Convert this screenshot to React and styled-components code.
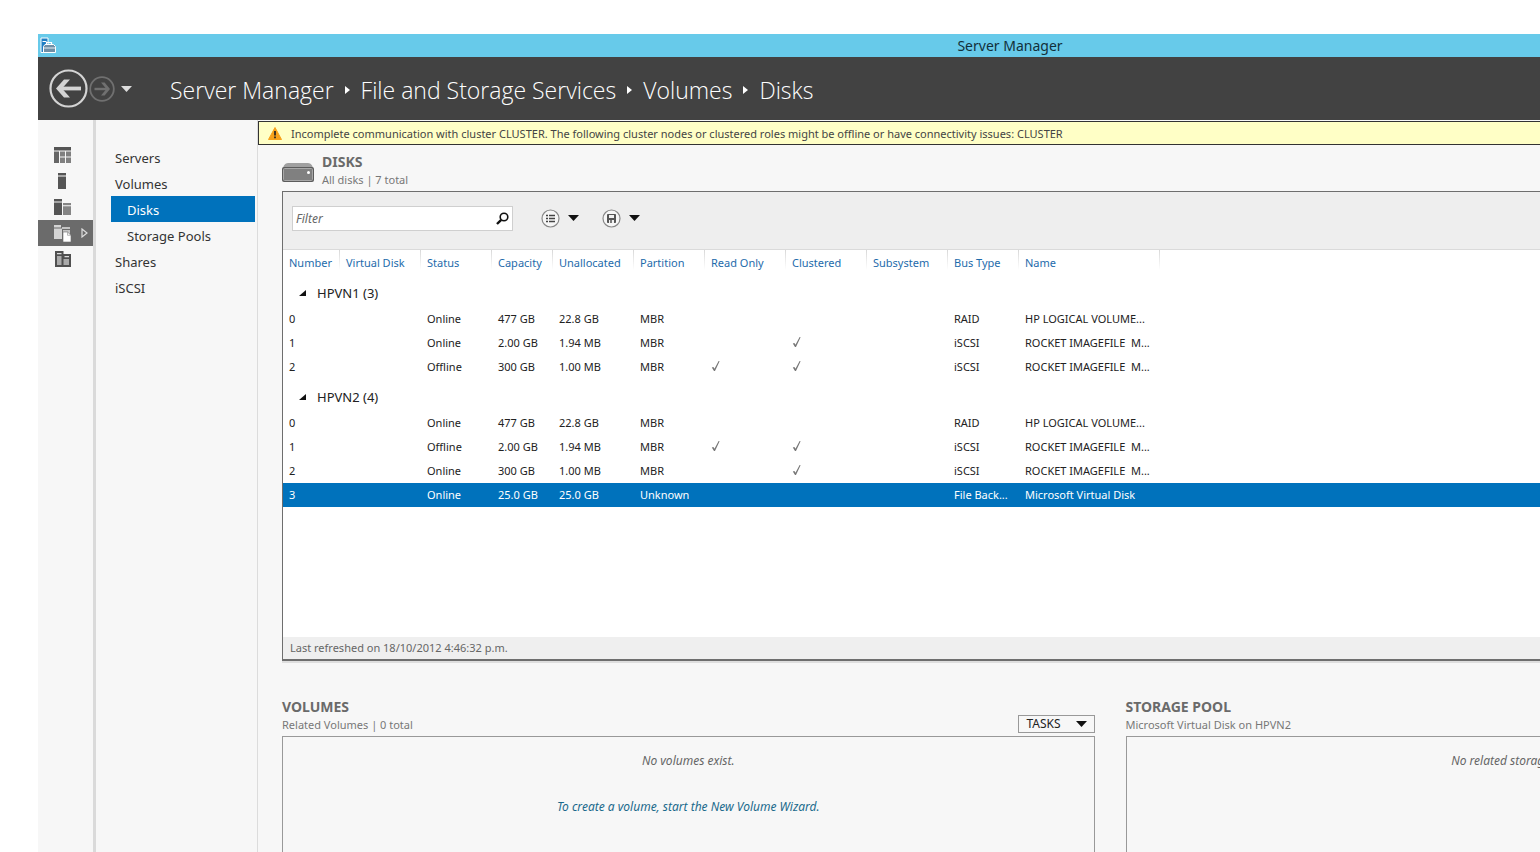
import React from "react";
import styled, { createGlobalStyle } from "styled-components";

const GlobalStyle = createGlobalStyle`
    * {
        box-sizing: border-box;
    }

    body {
        margin: 0;
        background: #fff;
        font-family: "Segoe UI", "Noto Sans", "Open Sans", sans-serif;
        font-size: 11px;
        color: #222;
    }

    button, input {
        font: inherit;
        color: inherit;
    }

    button {
        padding: 0;
        border: 0;
        background: none;
        cursor: pointer;
    }
`

const Page = styled.div`
    height: 100vh;
    padding: 34px 0 0 38px;
    overflow: hidden;
`

// the window is wider than the screen and runs off its right edge
const Window = styled.div`
    display: flex;
    flex-direction: column;
    height: 100%;
    margin-right: -442px;
`

const TitleBar = styled.div`
    display: flex;
    flex: none;
    align-items: center;
    height: 23px;
    padding: 0 2px;
    background: #67caea;
`

const WindowTitle = styled.div`
    flex: 1;
    padding-right: 16px;
    text-align: center;
    font-size: 14px;
    line-height: 22px;
    color: #12303a;
`

const Header = styled.header`
    display: flex;
    flex: none;
    align-items: center;
    height: 63px;
    padding-left: 11px;
    background: #424242;
    color: #fff;
`

const NavButton = styled.button`
    display: flex;
    margin-right: ${({ $gap }) => $gap || 0}px;
`

const Breadcrumbs = styled.nav`
    display: flex;
    align-items: center;
    gap: 11px;
    margin-left: 38px;
    padding-top: 2px;
    font-family: "Segoe UI", "Open Sans", sans-serif;
    font-size: 23px;
    font-weight: 300;
    line-height: 32px;

    a {
        color: #fff;
        text-decoration: none;
        white-space: nowrap;
    }
`

const Body = styled.div`
    display: flex;
    flex: 1;
    min-height: 0;
    background: #f7f7f7;
`

const Rail = styled.nav`
    display: flex;
    flex: none;
    flex-direction: column;
    width: 58px;
    padding-top: 22px;
    border-right: 3px solid #dadada;
`

const RailButton = styled.button`
    display: flex;
    align-items: center;
    gap: 9px;
    height: 26px;
    padding-left: 16px;
    background: ${({ $active }) => ($active ? "#6b6b6b" : "transparent")};
`

const Menu = styled.nav`
    display: flex;
    flex: none;
    flex-direction: column;
    width: 162px;
    padding: 24px 2px 0 15px;
    border-right: 1px solid #dcdcdc;
`

const MenuItem = styled.a`
    height: 26px;
    padding-top: 2px;
    padding-left: ${({ $sub }) => ($sub ? 16 : 4)}px;
    font-size: 13px;
    line-height: 24px;
    text-decoration: none;
    color: ${({ $active }) => ($active ? "#fff" : "#333")};
    background: ${({ $active }) => ($active ? "#0072bc" : "transparent")};
`

const Main = styled.main`
    display: flex;
    flex: 1;
    flex-direction: column;
    min-width: 0;
    padding-top: 1px;
`

const Banner = styled.div`
    display: flex;
    flex: none;
    align-items: center;
    gap: 9px;
    height: 24px;
    padding-left: 9px;
    border: 1px solid #333;
    background: #ffffc6;
    color: #444;
    white-space: nowrap;
`

const Content = styled.div`
    padding: 8px 44px 0 24px;
`

const TileHead = styled.div`
    display: flex;
    align-items: flex-end;
    gap: 8px;
    height: 38px;
    padding-bottom: 2px;
`

const TileTitle = styled.h2`
    margin: 0;
    font-size: 14px;
    font-weight: 700;
    line-height: 18px;
    color: #6a6a6a;
`

const TileSubtitle = styled.div`
    line-height: 18px;
    color: #777;
`

const DiskPanel = styled.section`
    border: 1px solid #6e6e6e;
    border-bottom-width: 2px;
    background: #fff;
    box-shadow: 0 2px 0 #dedede;
`

const Toolbar = styled.div`
    display: flex;
    align-items: center;
    height: 58px;
    padding: 0 9px 5px;
    border-bottom: 1px solid #dadada;
    background: #eee;
`

const FilterBox = styled.label`
    display: flex;
    align-items: center;
    width: 221px;
    height: 25px;
    margin-right: 28px;
    padding: 0 3px;
    border: 1px solid #cfcfcf;
    background: #fff;
`

const FilterInput = styled.input`
    flex: 1;
    min-width: 0;
    padding: 0;
    border: 0;
    outline: 0;
    background: none;
    font-size: 12px;

    &::placeholder {
        font-style: italic;
        color: #666;
        opacity: 1;
    }
`

const ToolButton = styled.button`
    display: flex;
    align-items: center;
    gap: 8px;
    margin-right: 23px;
`

const TableArea = styled.div`
    min-height: 387px;
`

const Table = styled.table`
    width: 100%;
    table-layout: fixed;
    border-collapse: collapse;
`

const HeadCell = styled.th`
    width: ${({ $width }) => ($width ? `${$width}px` : "auto")};
    height: 25px;
    padding: 0 0 0 6px;
    background: ${({ $width }) =>
        $width ? "linear-gradient(#d8d8d8, #fff) right top / 1px 20px no-repeat" : "none"};
    font-weight: 400;
    text-align: left;
    white-space: nowrap;
    color: #1e6bab;
`

const GroupCell = styled.td`
    height: 32px;
    padding: 4px 0 0 16px;
`

const GroupButton = styled.button`
    display: flex;
    align-items: center;
    gap: 11px;
    font-size: 13px;
    line-height: 24px;
`

const Row = styled.tr`
    background: ${({ $selected }) => ($selected ? "#0072bc" : "transparent")};
    color: ${({ $selected }) => ($selected ? "#fff" : "#222")};
`

const Cell = styled.td`
    height: 24px;
    padding: 0 0 2px 6px;
    overflow: hidden;
    white-space: pre;

    svg {
        display: block;
    }
`

const PanelFooter = styled.div`
    height: 22px;
    padding-left: 7px;
    background: #efefef;
    line-height: 22px;
    color: #666;
`

const Tiles = styled.div`
    display: grid;
    grid-template-columns: 1fr 1fr;
    gap: 31px;
    padding-top: 37px;
`

const TileText = styled.div`
    flex: 1;
`

const TasksButton = styled.button`
    display: flex;
    align-items: center;
    justify-content: space-between;
    width: 77px;
    height: 18px;
    margin-bottom: 1px;
    padding: 0 7px 0 8px;
    border: 1px solid #999;
    font-size: 12px;
    line-height: 16px;
`

const TilePanel = styled.div`
    display: flex;
    flex-direction: column;
    align-items: center;
    gap: 28px;
    min-height: 240px;
    padding-top: 15px;
    border: 1px solid #999;
    font-size: 12px;
    font-style: italic;
    line-height: 18px;
    color: #666;
`

const WizardLink = styled.a`
    text-decoration: none;
    color: #1b6a8c;
`

const Caret = ({ color = "#111", width = 11, height = 6 }) => (
    <svg width={width} height={height} viewBox="0 0 11 6">
        <path d="M0 0h11L5.5 6z" fill={color} />
    </svg>
)

const Check = () => (
    <svg width="10" height="12" viewBox="0 0 10 12">
        <path d="M.8 7.500l1.600-.6 1.100 1.900L7.600 1l1 .2L4 11H3z" fill="#777" />
    </svg>
)

const railIcons = [
    {
        label: "Dashboard",
        drawing: (
            <>
                <path d="M0 0h17v3.500H0z" fill="#555" />
                <path d="M0 4.500h5V16H0z" fill="#666" />
                <path d="M6 4.500h5v5H6zM12 4.500h5v5h-5zM6 10.500h5V16H6zM12 10.500h5V16h-5z" fill="#808080" />
            </>
        ),
    },
    {
        label: "Local Server",
        drawing: (
            <>
                <path d="M4 0h8v2.500H4z" fill="#555" />
                <path d="M4 3.500h8V16H4z" fill="#555" />
            </>
        ),
    },
    {
        label: "All Servers",
        drawing: (
            <>
                <path d="M0 0h8v2.500H0zM0 3.500h8V16H0z" fill="#555" />
                <path d="M9 4h8v2.200H9zM9 7.200h8V16H9z" fill="#858585" />
            </>
        ),
    },
    {
        label: "File and Storage Services",
        active: true,
        drawing: (
            <>
                <path d="M0 0h7v2.500H0zM0 3.500h8V14H0z" fill="#d4d4d4" />
                <path d="M8 2h8v2H8zM9 5h7v5H9z" fill="#c4c4c4" />
                <path d="M9 7h4.500L17 10.300V17H9z" fill="#fff" stroke="#6b6b6b" strokeWidth=".6" />
                <path d="M13.500 7v3.300H17" fill="none" stroke="#999" strokeWidth=".7" />
            </>
        ),
    },
    {
        label: "Hyper-V",
        drawing: (
            <>
                <path d="M1 0h8.500v3H17v13H1z" fill="#505050" />
                <path d="M3 2h4.500v1.300H3zM10.500 5h4.500v1.300h-4.500z" fill="#ddd" />
                <path d="M3 5h4.500v9H3zM9.500 8h5.500v6H9.500z" fill="#aaa" />
            </>
        ),
    },
]

const menuItems = [
    { label: "Servers" },
    { label: "Volumes" },
    { label: "Disks", sub: true, active: true },
    { label: "Storage Pools", sub: true },
    { label: "Shares" },
    { label: "iSCSI" },
]

const crumbs = ["Server Manager", "File and Storage Services", "Volumes", "Disks"]

const columns = [
    { key: "number", label: "Number", width: 57 },
    { key: "virtualDisk", label: "Virtual Disk", width: 81 },
    { key: "status", label: "Status", width: 71 },
    { key: "capacity", label: "Capacity", width: 61 },
    { key: "unallocated", label: "Unallocated", width: 81 },
    { key: "partition", label: "Partition", width: 71 },
    { key: "readOnly", label: "Read Only", width: 81 },
    { key: "clustered", label: "Clustered", width: 81 },
    { key: "subsystem", label: "Subsystem", width: 81 },
    { key: "busType", label: "Bus Type", width: 71 },
    { key: "name", label: "Name", width: 141 },
]

const groups = [
    {
        name: "HPVN1",
        disks: [
            { number: "0", status: "Online", capacity: "477 GB", unallocated: "22.8 GB", partition: "MBR", busType: "RAID", name: "HP LOGICAL VOLUME..." },
            { number: "1", status: "Online", capacity: "2.00 GB", unallocated: "1.94 MB", partition: "MBR", clustered: true, busType: "iSCSI", name: "ROCKET IMAGEFILE  M..." },
            { number: "2", status: "Offline", capacity: "300 GB", unallocated: "1.00 MB", partition: "MBR", readOnly: true, clustered: true, busType: "iSCSI", name: "ROCKET IMAGEFILE  M..." },
        ],
    },
    {
        name: "HPVN2",
        disks: [
            { number: "0", status: "Online", capacity: "477 GB", unallocated: "22.8 GB", partition: "MBR", busType: "RAID", name: "HP LOGICAL VOLUME..." },
            { number: "1", status: "Offline", capacity: "2.00 GB", unallocated: "1.94 MB", partition: "MBR", readOnly: true, clustered: true, busType: "iSCSI", name: "ROCKET IMAGEFILE  M..." },
            { number: "2", status: "Online", capacity: "300 GB", unallocated: "1.00 MB", partition: "MBR", clustered: true, busType: "iSCSI", name: "ROCKET IMAGEFILE  M..." },
            { number: "3", status: "Online", capacity: "25.0 GB", unallocated: "25.0 GB", partition: "Unknown", busType: "File Back...", name: "Microsoft Virtual Disk", selected: true },
        ],
    },
]

const DiskTable = () => {
    return (
        <Table>
            <thead>
                <tr>
                    {columns.map((column) => (
                        <HeadCell key={column.key} $width={column.width} scope="col">{column.label}</HeadCell>
                    ))}
                    <HeadCell as="td" />
                </tr>
            </thead>
            {groups.map((group) => (
                <tbody key={group.name}>
                    <tr>
                        <GroupCell colSpan={columns.length + 1}>
                            <GroupButton type="button" aria-expanded="true">
                                <svg width="7" height="6" viewBox="0 0 7 6"><path d="M7 0v6H0z" fill="#111" /></svg>
                                {`${group.name} (${group.disks.length})`}
                            </GroupButton>
                        </GroupCell>
                    </tr>
                    {group.disks.map((disk) => (
                        <Row key={disk.number} $selected={disk.selected}>
                            {columns.map(({ key }) => (
                                <Cell key={key}>{disk[key] === true ? <Check /> : disk[key]}</Cell>
                            ))}
                            <Cell />
                        </Row>
                    ))}
                </tbody>
            ))}
        </Table>
    )
}

const App = () => {
    return (
        <>
        <GlobalStyle />
        <Page>
            <Window>
                <TitleBar>
                    <svg width="16" height="17" viewBox="0 0 16 17">
                        <path d="M1 1h7v14.500H1z" fill="#1f7fc4" stroke="#fff" />
                        <path d="M2.500 4.500h4" stroke="#fff" />
                        <path d="M3.500 9.500l1.500-2h8.500l2 2v6h-12z" fill="#6f8fa6" stroke="#fff" />
                        <path d="M6.500 7V5.500h5V7" fill="none" stroke="#fff" strokeWidth="1.200" />
                        <path d="M3.500 11h12" stroke="#e8f0f4" />
                    </svg>
                    <WindowTitle>Server Manager</WindowTitle>
                </TitleBar>
                <Header>
                    <NavButton type="button" aria-label="Back" $gap={1}>
                        <svg width="39" height="39" viewBox="0 0 39 39" fill="none" stroke="#d4d4d4">
                            <circle cx="19.5" cy="19.5" r="18" strokeWidth="2.200" />
                            <path d="M32 19.500H10" strokeWidth="3.800" />
                            <path d="M15 10.500h6l-8 9 8 9h-6l-8-9z" fill="#d4d4d4" stroke="none" />
                        </svg>
                    </NavButton>
                    <NavButton type="button" aria-label="Forward" $gap={6}>
                        <svg width="26" height="26" viewBox="0 0 26 26" fill="none" stroke="#707070">
                            <circle cx="13" cy="13" r="11.8" strokeWidth="1.800" />
                            <path d="M5.500 13h13" strokeWidth="2.400" />
                            <path d="M12 6.500h3.600l5.400 6.500-5.400 6.500H12l5.400-6.500z" fill="#707070" stroke="none" />
                        </svg>
                    </NavButton>
                    <NavButton type="button" aria-label="Recent locations">
                        <Caret color="#dcdcdc" />
                    </NavButton>
                    <Breadcrumbs>
                        {crumbs.map((crumb, index) => (
                            <React.Fragment key={crumb}>
                                {index > 0 && (
                                    <svg width="5" height="8" viewBox="0 0 5 8"><path d="M0 0l5 4-5 4z" fill="#fff" /></svg>
                                )}
                                <a href="#">{crumb}</a>
                            </React.Fragment>
                        ))}
                    </Breadcrumbs>
                </Header>
                <Body>
                    <Rail>
                        {railIcons.map((icon) => (
                            <RailButton key={icon.label} type="button" aria-label={icon.label} $active={icon.active}>
                                <svg width="18" height="17" viewBox="0 0 18 17">{icon.drawing}</svg>
                                {icon.active && (
                                    <svg width="7" height="10" viewBox="0 0 7 10"><path d="M1 1l5 4-5 4z" fill="none" stroke="#ddd" strokeWidth="1.200" /></svg>
                                )}
                            </RailButton>
                        ))}
                    </Rail>
                    <Menu>
                        {menuItems.map((item) => (
                            <MenuItem key={item.label} href="#" $sub={item.sub} $active={item.active}>{item.label}</MenuItem>
                        ))}
                    </Menu>
                    <Main>
                        <Banner role="alert">
                            <svg width="14" height="13" viewBox="0 0 14 13">
                                <path d="M7 .5L13.500 12.500H.5z" fill="#f7a11a" stroke="#f7a11a" strokeLinejoin="round" />
                                <path d="M7 4v4.500M7 9.500v1.700" stroke="#222" strokeWidth="1.700" />
                            </svg>
                            Incomplete communication with cluster CLUSTER. The following cluster nodes or clustered roles might be offline or have connectivity issues: CLUSTER
                        </Banner>
                        <Content>
                            <TileHead>
                                <svg width="32" height="28" viewBox="0 0 32 28">
                                    <path d="M1 7c1-4 3-5 6-5h18c3 0 5 1 6 5z" fill="#a0a0a0" />
                                    <rect x="0" y="6" width="32" height="15" rx="2" fill="#5c5c5c" />
                                    <rect x="1.500" y="7.500" width="29" height="12" rx="1" fill="#808080" stroke="#a8a8a8" />
                                    <circle cx="26.500" cy="11.500" r="1.500" fill="#fff" />
                                </svg>
                                <TileText>
                                    <TileTitle>DISKS</TileTitle>
                                    <TileSubtitle>All disks | 7 total</TileSubtitle>
                                </TileText>
                            </TileHead>
                            <DiskPanel>
                                <Toolbar>
                                    <FilterBox>
                                        <FilterInput type="text" placeholder="Filter" aria-label="Filter" />
                                        <svg width="13" height="13" viewBox="0 0 13 13" fill="none" stroke="#111">
                                            <circle cx="8" cy="5" r="3.800" strokeWidth="1.600" />
                                            <path d="M5.200 7.800L1 12" strokeWidth="2.400" />
                                        </svg>
                                    </FilterBox>
                                    <ToolButton type="button" aria-label="View">
                                        <svg width="19" height="19" viewBox="0 0 19 19" fill="none">
                                            <circle cx="9.500" cy="9.500" r="8.500" fill="#f6f6f6" stroke="#888" strokeWidth="1.200" />
                                            <path d="M5 6.500h2M8 6.500h6M5 9.500h2M8 9.500h6M5 12.500h2M8 12.500h6" stroke="#444" strokeWidth="1.500" />
                                        </svg>
                                        <Caret />
                                    </ToolButton>
                                    <ToolButton type="button" aria-label="Saved queries">
                                        <svg width="19" height="19" viewBox="0 0 19 19" fill="none">
                                            <circle cx="9.500" cy="9.500" r="8.500" fill="#f6f6f6" stroke="#888" strokeWidth="1.200" />
                                            <path d="M5.500 5.500h8v8h-8z" fill="#555" stroke="#555" />
                                            <path d="M7 6h5v3H7zM7 11h5v3H7z" fill="#f0f0f0" />
                                            <path d="M9 11v3" stroke="#555" strokeWidth="1.500" />
                                        </svg>
                                        <Caret />
                                    </ToolButton>
                                </Toolbar>
                                <TableArea>
                                    <DiskTable />
                                </TableArea>
                                <PanelFooter>Last refreshed on 18/10/2012 4:46:32 p.m.</PanelFooter>
                            </DiskPanel>
                            <Tiles>
                                <section>
                                    <TileHead>
                                        <TileText>
                                            <TileTitle>VOLUMES</TileTitle>
                                            <TileSubtitle>Related Volumes | 0 total</TileSubtitle>
                                        </TileText>
                                        <TasksButton type="button">
                                            TASKS
                                            <Caret />
                                        </TasksButton>
                                    </TileHead>
                                    <TilePanel>
                                        <span>No volumes exist.</span>
                                        <WizardLink href="#">To create a volume, start the New Volume Wizard.</WizardLink>
                                    </TilePanel>
                                </section>
                                <section>
                                    <TileHead>
                                        <TileText>
                                            <TileTitle>STORAGE POOL</TileTitle>
                                            <TileSubtitle>Microsoft Virtual Disk on HPVN2</TileSubtitle>
                                        </TileText>
                                    </TileHead>
                                    <TilePanel>
                                        <span>No related storage pool exists.</span>
                                    </TilePanel>
                                </section>
                            </Tiles>
                        </Content>
                    </Main>
                </Body>
            </Window>
        </Page>
        </>
    )
}

export default App
